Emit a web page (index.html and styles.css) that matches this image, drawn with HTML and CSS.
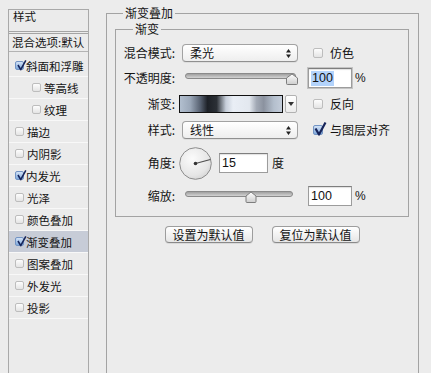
FILE: index.html
```html
<!DOCTYPE html>
<html>
<head>
<meta charset="utf-8">
<title>图层样式</title>
<link rel="stylesheet" href="styles.css">
</head>
<body>
<div class="dialog">
  <div class="stylelist">
    <div class="sl-head">样式</div>
    <div class="sl-blend">混合选项:默认</div>
    <ul class="sl-items">
      <li><span class="cb on"><svg viewBox="0 0 14 15"><path d="M2.5 7.5 L6 13.5 L12.5 1.5"/></svg></span>斜面和浮雕</li>
      <li class="sub"><span class="cb"></span>等高线</li>
      <li class="sub"><span class="cb"></span>纹理</li>
      <li><span class="cb"></span>描边</li>
      <li><span class="cb"></span>内阴影</li>
      <li><span class="cb on"><svg viewBox="0 0 14 15"><path d="M2.5 7.5 L6 13.5 L12.5 1.5"/></svg></span>内发光</li>
      <li><span class="cb"></span>光泽</li>
      <li><span class="cb"></span>颜色叠加</li>
      <li class="sel"><span class="cb on"><svg viewBox="0 0 14 15"><path d="M2.5 7.5 L6 13.5 L12.5 1.5"/></svg></span>渐变叠加</li>
      <li><span class="cb"></span>图案叠加</li>
      <li><span class="cb"></span>外发光</li>
      <li><span class="cb"></span>投影</li>
    </ul>
  </div>

  <div class="main">
    <fieldset class="outer">
      <legend>渐变叠加</legend>
      <fieldset class="inner">
        <legend>渐变</legend>
        <div class="grid">
          <!-- row 1 -->
          <div class="lbl">混合模式:</div>
          <div class="cell">
            <div class="select"><span>柔光</span><svg class="updown" viewBox="0 0 5 9"><path d="M0 3.5 L2.5 0 L5 3.5Z M0 5.5 L5 5.5 L2.5 9Z"/></svg></div>
          </div>
          <div class="cell"><span class="chk"><span class="cb"></span>仿色</span></div>

          <!-- row 2 -->
          <div class="lbl">不透明度:</div>
          <div class="cell">
            <svg class="slider" width="114" height="13" viewBox="0 0 114 13">
              <defs>
                <linearGradient id="tr1" x1="0" y1="0" x2="0" y2="1"><stop offset="0" stop-color="#9a9a9a"/><stop offset="1" stop-color="#d9d9d9"/></linearGradient>
                <linearGradient id="th1" x1="0" y1="0" x2="0" y2="1"><stop offset="0" stop-color="#ffffff"/><stop offset="1" stop-color="#cdcdcd"/></linearGradient>
              </defs>
              <rect x="0.5" y="1.5" width="110" height="5" rx="2.5" fill="url(#tr1)" stroke="#8a8a8a"/>
              <path d="M107 2 L112.5 6 L112.5 11.5 Q112.5 12.5 111.5 12.5 L102.5 12.5 Q101.5 12.5 101.5 11.5 L101.5 6 Z" fill="url(#th1)" stroke="#7d7d7d"/>
            </svg>
          </div>
          <div class="cell"><span class="num focus"><span class="hl">100</span></span><span class="unit">%</span></div>

          <!-- row 3 -->
          <div class="lbl">渐变:</div>
          <div class="cell">
            <div class="gradient"></div>
            <div class="gbtn"><svg viewBox="0 0 6 4" width="6" height="4"><path d="M0 0H6L3 4Z"/></svg></div>
          </div>
          <div class="cell"><span class="chk"><span class="cb"></span>反向</span></div>

          <!-- row 4 -->
          <div class="lbl">样式:</div>
          <div class="cell">
            <div class="select"><span>线性</span><svg class="updown" viewBox="0 0 5 9"><path d="M0 3.5 L2.5 0 L5 3.5Z M0 5.5 L5 5.5 L2.5 9Z"/></svg></div>
          </div>
          <div class="cell"><span class="chk"><span class="cb on"><svg viewBox="0 0 14 15"><path d="M2.5 7.5 L6 13.5 L12.5 1.5"/></svg></span>与图层对齐</span></div>

          <!-- row 5 -->
          <div class="lbl">角度:</div>
          <div class="cell">
            <svg class="dial" width="33" height="33" viewBox="0 0 33 33">
              <defs>
                <radialGradient id="dg" cx="0.4" cy="0.35" r="0.75"><stop offset="0" stop-color="#fbfbfb"/><stop offset="0.7" stop-color="#e6e6e6"/><stop offset="1" stop-color="#cfcfcf"/></radialGradient>
              </defs>
              <circle cx="16.5" cy="16.5" r="15.8" fill="url(#dg)" stroke="#8c8c8c"/>
              <line x1="16.5" y1="16.5" x2="31.4" y2="12.5" stroke="#4e4e4e" stroke-width="1.2"/>
              <circle cx="16.5" cy="16.5" r="1.8" fill="#333"/>
            </svg>
            <span class="num angle">15</span><span class="unit deg">度</span>
          </div>
          <div class="cell"></div>

          <!-- row 6 -->
          <div class="lbl">缩放:</div>
          <div class="cell">
            <svg class="slider" width="114" height="13" viewBox="0 0 114 13">
              <defs>
                <linearGradient id="tr2" x1="0" y1="0" x2="0" y2="1"><stop offset="0" stop-color="#9a9a9a"/><stop offset="1" stop-color="#d9d9d9"/></linearGradient>
                <linearGradient id="th2" x1="0" y1="0" x2="0" y2="1"><stop offset="0" stop-color="#ffffff"/><stop offset="1" stop-color="#cdcdcd"/></linearGradient>
              </defs>
              <rect x="0.5" y="1.5" width="107" height="5" rx="2.5" fill="url(#tr2)" stroke="#8a8a8a"/>
              <path d="M66 2 L71 6 L71 11.5 Q71 12.5 70 12.5 L62 12.5 Q61 12.5 61 11.5 L61 6 Z" fill="url(#th2)" stroke="#7d7d7d"/>
            </svg>
          </div>
          <div class="cell"><span class="num">100</span><span class="unit">%</span></div>
        </div>
      </fieldset>
      <div class="btns">
        <button class="btn" type="button">设置为默认值</button>
        <button class="btn" type="button">复位为默认值</button>
      </div>
    </fieldset>
  </div>
</div>
</body>
</html>
```

FILE: styles.css
```css
* { box-sizing: border-box; }
html, body { margin: 0; padding: 0; }
body {
  width: 431px;
  height: 373px;
  overflow: hidden;
  background: #ececec;
  font-family: "Noto Sans CJK SC", "Liberation Sans", sans-serif;
  font-size: 12px;
  line-height: 14px;
  color: #141414;
}
.dialog {
  display: flex;
  align-items: flex-start;
  height: 373px;
}

/* left style list */
.stylelist {
  flex: none;
  margin: 9px 0 0 8px;
  width: 81px;
  height: 380px;
  border: 1px solid #a9a9a9;
  background: #ebebeb;
  font-size: 11.5px;
  white-space: nowrap;
  overflow: hidden;
}
.sl-head {
  height: 24px;
  padding: 0 4px;
  line-height: 13px;
  border-bottom: 3px double #a4a4a4;
}
.sl-blend {
  height: 18px;
  padding: 0 3px;
  line-height: 17px;
  border-bottom: 1px solid #b3b3b3;
}
.sl-items {
  list-style: none;
  margin: 0;
  padding: 3px 0 0;
}
.sl-items li {
  display: flex;
  align-items: center;
  height: 22px;
  padding-left: 6px;
  border-bottom: 1px solid #f8f8f8;
}
.sl-items li.sub { padding-left: 23px; }
.sl-items li.sel { background: #c7ccd7; }
.sl-items .cb { margin-right: 3px; }
.sl-items .cb.on { margin-right: 2px; }
.sl-items .cb svg {
  width: 11px;
  height: 12px;
  left: 0;
  top: -3px;
  stroke-width: 2;
}

/* checkboxes */
.cb {
  position: relative;
  flex: none;
  display: inline-block;
  width: 9px;
  height: 9px;
  border: 1px solid #bdbdbd;
  border-radius: 2px;
  background: linear-gradient(#fdfdfd, #e4e4e4);
}
.cb.on {
  border-color: #7394c4;
  background: linear-gradient(#d3e3f7, #7ea8dc);
}
.cb svg {
  position: absolute;
  left: -1px;
  top: -5px;
  width: 13px;
  height: 14px;
  fill: none;
  stroke: #16245a;
  stroke-width: 2.2;
  stroke-linejoin: round;
}
.chk .cb { width: 10px; height: 10px; }
.chk .cb svg { width: 14px; height: 15px; top: -5px; }

/* main area */
.main {
  flex: none;
  margin-left: 17px;
  width: 313px;
}
fieldset {
  margin: 0;
  min-width: 0;
  border: 1px solid #a3a3a3;
}
fieldset > legend {
  padding: 0 2px;
  line-height: 14px;
}
.outer {
  margin-top: 6px;
  height: 420px;
  padding: 2px 9px 0 8px;
}
.outer > legend { margin-left: 8px; }
.inner {
  padding: 6px 0 8px 0;
}
.inner > legend { margin-left: 17px; }

.grid {
  display: grid;
  grid-template-columns: 59px 132px 1fr;
  grid-template-rows: 22px 24px 24px 24px 38px 24px;
  row-gap: 2px;
  align-items: center;
}
.lbl { text-align: right; white-space: nowrap; }
.cell {
  display: flex;
  align-items: center;
  height: 100%;
}

.select {
  margin-left: 7px;
  width: 116px;
  height: 18px;
  display: flex;
  align-items: center;
  justify-content: space-between;
  padding: 0 6px 0 7px;
  border: 1px solid #a2a2a2;
  border-bottom-color: #909090;
  border-radius: 4px;
  background: linear-gradient(#ffffff, #eeeeee);
  box-shadow: 0 1px 0 rgba(0, 0, 0, 0.06);
}
.updown { width: 5px; height: 9px; fill: #222; }

.chk {
  display: flex;
  align-items: center;
  gap: 7px;
  margin-left: 6px;
  white-space: nowrap;
}

.slider { display: block; margin-left: 10px; }

.num {
  display: flex;
  align-items: center;
  width: 44px;
  height: 20px;
  margin-left: 1px;
  padding-left: 2px;
  background: #ffffff;
  border: 1px solid #9c9c9c;
  border-top-color: #7e7e7e;
  box-shadow: inset 0 1px 1px rgba(0, 0, 0, 0.12);
  font-family: "Liberation Sans", Arial, sans-serif;
  font-size: 12.5px;
  color: #111;
}
.num.focus { box-shadow: 0 0 0 1px #c4c4c4, inset 0 1px 1px rgba(0, 0, 0, 0.12); }
.hl { background: #b3d3fb; line-height: 15px; padding: 0 1px; }
.num.angle { width: 49px; margin-left: 7px; }
.unit { margin-left: 3px; font-family: "Liberation Sans", Arial, sans-serif; font-size: 12px; }
.unit.deg { margin-left: 4px; font-family: "Noto Sans CJK SC", sans-serif; }

.gradient {
  margin-left: 4px;
  width: 104px;
  height: 18px;
  border: 1px solid #111;
  background: linear-gradient(90deg,
    #b2bfcf 0%, #9ba8b9 10%, #566070 20%, #1d2127 27%, #2b3036 36%,
    #c6ced9 45%, #e9eef5 52%, #e3e8ef 68%, #a2a9b5 75%, #8b929f 82%,
    #b4bfcd 92%, #c3ccd9 100%);
}
.gbtn {
  margin-left: 2px;
  width: 12px;
  height: 18px;
  display: flex;
  align-items: center;
  justify-content: center;
  border: 1px solid #b2b2b2;
  border-radius: 2px;
  background: linear-gradient(#ffffff, #ececec);
}
.gbtn svg { fill: #333; }

.dial { display: block; margin-left: 4px; }

.btns {
  display: flex;
  justify-content: center;
  gap: 19px;
  margin-top: 9px;
}
.btn {
  width: 88px;
  height: 17px;
  padding: 0;
  border: 1px solid #9d9d9d;
  border-bottom-color: #8a8a8a;
  border-radius: 4px;
  background: linear-gradient(#ffffff, #e6e6e6);
  box-shadow: 0 1px 0 rgba(0, 0, 0, 0.08);
  font-family: "Noto Sans CJK SC", sans-serif;
  font-size: 12px;
  line-height: 14px;
  color: #141414;
}
```
